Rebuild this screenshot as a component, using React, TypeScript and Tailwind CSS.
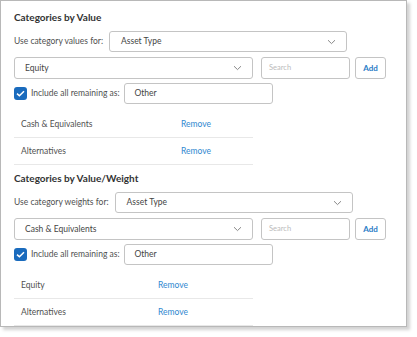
import React from 'react';

const Chevron = () => (
  <svg width="9" height="6" viewBox="0 0 9 6" fill="none" className="shrink-0">
    <path d="M1 1.2L4.5 4.6L8 1.2" stroke="#888" strokeWidth="1" />
  </svg>
);

const Check = () => (
  <span className="w-[13px] h-[13px] rounded-[3px] bg-[#1a6bbd] flex items-center justify-center shrink-0">
    <svg width="9" height="7" viewBox="0 0 9 7" fill="none">
      <path d="M1 3.6L3.4 5.8L8 1.2" stroke="#fff" strokeWidth="1.5" />
    </svg>
  </span>
);

interface SectionProps {
  title: string;
  label: string;
  picked: string;
  rows: string[];
  nameCol: string;
}

const Section: React.FC<SectionProps> = ({ title, label, picked, rows, nameCol }) => (
  <div className="flex flex-col text-[8.5px] text-[#505050]">
    <div className="h-[14px] flex items-center font-bold text-[10px] text-[#333]">{title}</div>
    <div className="flex items-center mt-[7px] h-[21px]">
      <span className="mr-[6px]">{label}</span>
      <div className="w-[238px] h-[21px] border border-[#c4c4c4] rounded-[3px] flex items-center justify-between pl-[11px] pr-[10px] text-[#444]">
        <span>Asset Type</span>
        <Chevron />
      </div>
    </div>
    <div className="flex items-center mt-[5px] h-[22px]">
      <div className="w-[239px] h-[22px] border border-[#c4c4c4] rounded-[3px] flex items-center justify-between pl-[10px] pr-[10px] text-[#444]">
        <span>{picked}</span>
        <Chevron />
      </div>
      <div className="w-[89px] h-[22px] ml-[8px] border border-[#c4c4c4] rounded-[3px] flex items-center pl-[7px] text-[7.5px] text-[#bbb]">
        Search
      </div>
      <div className="w-[31px] h-[22px] ml-[5px] border border-[#c4c4c4] rounded-[3px] flex items-center justify-center text-[8px] font-bold text-[#2a7cc6]">
        Add
      </div>
    </div>
    <div className="flex items-center mt-[4px] h-[21px]">
      <Check />
      <span className="ml-[4px] mr-[4px]">Include all remaining as:</span>
      <div className="w-[149px] h-[21px] border border-[#c4c4c4] rounded-[3px] flex items-center pl-[10px] text-[#444]">
        Other
      </div>
    </div>
    <div className="w-[239px] mt-[7px]">
      {rows.map((r) => (
        <div key={r} className="h-[27px] flex items-center border-b border-[#e8e8e8]">
          <span className={`pl-[7px] ${nameCol}`}>{r}</span>
          <span className="text-[#3088d0]">Remove</span>
        </div>
      ))}
    </div>
  </div>
);

export default function App() {
  return (
    <div className="w-[417px] h-[337px] bg-white" style={{ fontFamily: 'Lato, "Noto Sans", sans-serif' }}>
      <div className="w-[407px] h-[327px] border border-[#b8b8b8] bg-white shadow-[3px_3px_3px_rgba(0,0,0,0.18)] pl-[13px] pt-[9px] flex flex-col">
        <Section
          title="Categories by Value"
          label="Use category values for:"
          picked="Equity"
          rows={['Cash & Equivalents', 'Alternatives']}
          nameCol="w-[167px]"
        />
        <div className="mt-[6px]">
          <Section
            title="Categories by Value/Weight"
            label="Use category weights for:"
            picked="Cash & Equivalents"
            rows={['Equity', 'Alternatives']}
            nameCol="w-[144px]"
          />
        </div>
      </div>
    </div>
  );
}
